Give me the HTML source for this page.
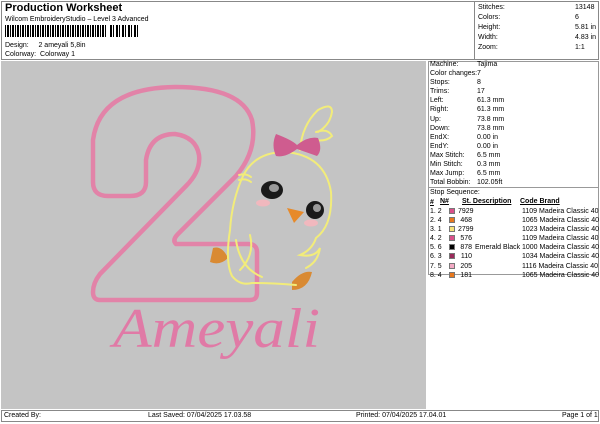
<!DOCTYPE html>
<html><head><meta charset="utf-8"><style>
*{margin:0;padding:0;box-sizing:border-box}
body{width:600px;height:424px;background:#fff;font-family:"Liberation Sans",Arial,sans-serif;font-size:7px;color:#000;position:relative;overflow:hidden}
.a{position:absolute;white-space:nowrap}
.sw{display:inline-block;width:6px;height:6px;vertical-align:-1px;border:1px solid #777}
</style></head><body>
<div class="a" style="left:1px;top:1px;width:598px;height:59px;border:1px solid #888"></div>
<div class="a" style="left:474px;top:1px;width:1px;height:59px;background:#888"></div>
<div class="a" style="left:5px;top:2px;font-size:11px;font-weight:bold">Production Worksheet</div>
<div class="a" style="left:5px;top:16px">Wilcom EmbroideryStudio – Level 3 Advanced</div>
<div class="a" style="left:5px;top:25px;width:102px;height:12px;background:repeating-linear-gradient(90deg,#000 0 1px,#fff 1px 2px,#000 2px 4px,#fff 4px 5px)"></div>
<div class="a" style="left:110px;top:25px;width:30px;height:12px;background:repeating-linear-gradient(90deg,#000 0 2px,#fff 2px 3px,#000 3px 4px,#fff 4px 6px)"></div>
<div class="a" style="left:5px;top:42px">Design:&nbsp;&nbsp;&nbsp;&nbsp;&nbsp;2 ameyali 5,8in</div>
<div class="a" style="left:5px;top:51px">Colorway:&nbsp; Colorway 1</div>
<div class="a" style="left:478px;top:3px;line-height:10px">Stitches:<br>Colors:<br>Height:<br>Width:<br>Zoom:</div>
<div class="a" style="left:575px;top:3px;line-height:10px">13148<br>6<br>5.81 in<br>4.83 in<br>1:1</div>

<div class="a" style="left:1px;top:61px;width:425px;height:348px;background:#c4c4c4"></div>
<svg class="a" style="left:0;top:0" width="600" height="424">
<path d="M100 300 L250 300 Q257 300 257 293 L257 252 Q257 244 248 244 L176 244 Q172 240 178 234 L236 176 Q258 150 252 120 Q242 87 175 87 Q100 88 93 140 L93 182 Q93 196 108 196 L130 196 Q146 196 146 182 L146 160 Q150 134 175 134 Q196 137 199 155 Q201 171 186 186 L100 274 Q93 283 93 292 Q93 300 100 300 Z" fill="none" stroke="#e283a8" stroke-width="4.5" stroke-linejoin="round"/>
<path d="M213 248 Q222 245 228 258 Q220 266 210 262Z M292 282 Q302 270 312 272 Q308 290 292 290Z" fill="#d98a33"/>
<g fill="none" stroke="#f2ec7a" stroke-width="2" stroke-linecap="round">
<path d="M243 176 Q255 152 285 152 Q325 155 331 192 Q333 225 316 238"/>
<path d="M243 176 Q232 200 230 230 Q225 262 232 276 Q240 286 252 283 Q272 283 296 285"/>
<path d="M236 240 Q240 268 262 277 M316 238 Q312 250 300 255 Q315 258 320 248 Q318 262 306 268"/>
<path d="M300 150 Q302 125 318 110 Q332 102 332 112 Q330 125 318 132 M316 132 Q328 128 332 136 Q326 142 314 140"/>
<path d="M239 175 Q246 173 251 177 M239 180 Q246 178 251 182"/>
<path d="M250 235 Q255 255 240 270"/>
</g>
<path d="M276 134 Q292 140 297 145 Q308 136 318 138 Q323 150 317 156 L297 149 Q285 158 276 156 Q271 145 276 134Z" fill="#cf5c8f"/>
<ellipse cx="272" cy="190" rx="11" ry="9" fill="#1a1a1a"/><ellipse cx="274" cy="188" rx="5" ry="4" fill="#9a9a9a"/>
<ellipse cx="315" cy="210" rx="9" ry="9" fill="#1a1a1a"/><ellipse cx="317" cy="208" rx="4" ry="4" fill="#9a9a9a"/>
<path d="M287 208 L304 212 L294 223 Z" fill="#e78a2a"/>
<ellipse cx="263" cy="203" rx="7" ry="3.5" fill="#f1b8be"/>
<ellipse cx="311" cy="223" rx="7" ry="3.5" fill="#f1b8be"/>
<text x="113" y="347" font-family="Liberation Serif,serif" font-style="italic" font-size="56" fill="#e07aa6" textLength="207" lengthAdjust="spacingAndGlyphs">Ameyali</text>
</svg>

<div class="a" style="left:428px;top:61px;width:171px;height:214px;border:1px solid #999"></div>
<div class="a" style="left:428px;top:187px;width:171px;height:1px;background:#999"></div>
<div class="a" style="left:430px;top:60px;line-height:9.1px">Machine:<br>Color changes:<br>Stops:<br>Trims:<br>Left:<br>Right:<br>Up:<br>Down:<br>EndX:<br>EndY:<br>Max Stitch:<br>Min Stitch:<br>Max Jump:<br>Total Bobbin:</div>
<div class="a" style="left:477px;top:60px;line-height:9.1px">Tajima<br>7<br>8<br>17<br>61.3 mm<br>61.3 mm<br>73.8 mm<br>73.8 mm<br>0.00 in<br>0.00 in<br>6.5 mm<br>0.3 mm<br>6.5 mm<br>102.05ft</div>
<div class="a" style="left:430px;top:189px">Stop Sequence:</div>
<div class="a" style="left:430px;top:198px;font-weight:bold;text-decoration:underline;line-height:9px">#</div>
<div class="a" style="left:440px;top:198px;font-weight:bold;text-decoration:underline">N#</div>
<div class="a" style="left:462px;top:198px;font-weight:bold;text-decoration:underline">St. Description</div>
<div class="a" style="left:520px;top:198px;font-weight:bold;text-decoration:underline">Code Brand</div>
<div class="a" style="left:430px;top:207px;line-height:9.1px">1. 2<br>2. 4<br>3. 1<br>4. 2<br>5. 6<br>6. 3<br>7. 5<br>8. 4</div>
<div class="a" style="left:449px;top:207px;line-height:9.1px">
<span class="sw" style="background:#d9508a"></span><br><span class="sw" style="background:#e8781e"></span><br><span class="sw" style="background:#f6e37a"></span><br><span class="sw" style="background:#d9508a"></span><br><span class="sw" style="background:#000"></span><br><span class="sw" style="background:#9a2a5a"></span><br><span class="sw" style="background:#f2a9c4"></span><br><span class="sw" style="background:#e8781e"></span></div>
<div class="a" style="left:458px;top:207px;line-height:9.1px;width:14px;text-align:right">7929<br>468<br>2799<br>576<br>878<br>110<br>205<br>181</div>
<div class="a" style="left:475px;top:243.5px">Emerald Black</div>
<div class="a" style="left:522px;top:207px;line-height:9.1px">1109 Madeira Classic 40<br>1065 Madeira Classic 40<br>1023 Madeira Classic 40<br>1109 Madeira Classic 40<br>1000 Madeira Classic 40<br>1034 Madeira Classic 40<br>1116 Madeira Classic 40<br>1065 Madeira Classic 40</div>

<div class="a" style="left:1px;top:410px;width:598px;height:12px;border:1px solid #888"></div>
<div class="a" style="left:4px;top:412px">Created By:</div>
<div class="a" style="left:148px;top:412px">Last Saved: 07/04/2025 17.03.58</div>
<div class="a" style="left:356px;top:412px">Printed: 07/04/2025 17.04.01</div>
<div class="a" style="left:562px;top:412px">Page 1 of 1</div>
</body></html>
